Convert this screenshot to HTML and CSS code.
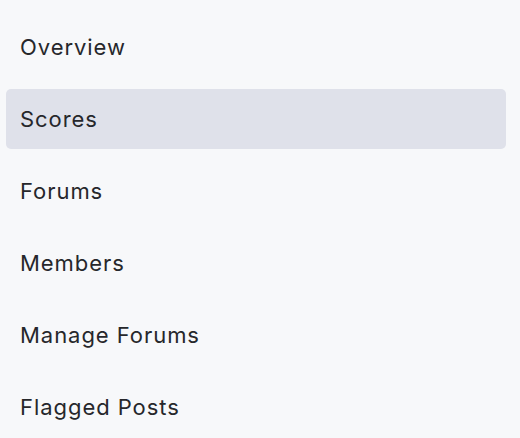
FILE: index.html
```html
<!DOCTYPE html>
<html lang="en">
<head>
    <meta charset="UTF-8">
    <title>Forum Admin</title>
    <link rel="stylesheet" href="styles.css">
</head>
<body>

<nav class="side-nav">
    <a class="nav-item" href="#">Overview</a>
    <a class="nav-item active" href="#">Scores</a>
    <a class="nav-item" href="#">Forums</a>
    <a class="nav-item" href="#">Members</a>
    <a class="nav-item" href="#">Manage Forums</a>
    <a class="nav-item" href="#">Flagged Posts</a>
</nav>

</body>
</html>
```

FILE: styles.css
```css
body {
    font-family: Inter, "Noto Sans", sans-serif;
    background: #f7f8fa;
    margin: 0;
    padding: 17px 14px 0 6px;
}

.side-nav {
    display: flex;
    flex-direction: column;
    gap: 12px;
}

.nav-item {
    display: flex;
    align-items: center;
    height: 60px;
    padding-left: 14px;
    border-radius: 5px;
    color: #26272b;
    font-size: 22px;
    letter-spacing: 0.95px;
    text-decoration: none;
}

.nav-item.active {
    background: #dfe1ea;
}
```
